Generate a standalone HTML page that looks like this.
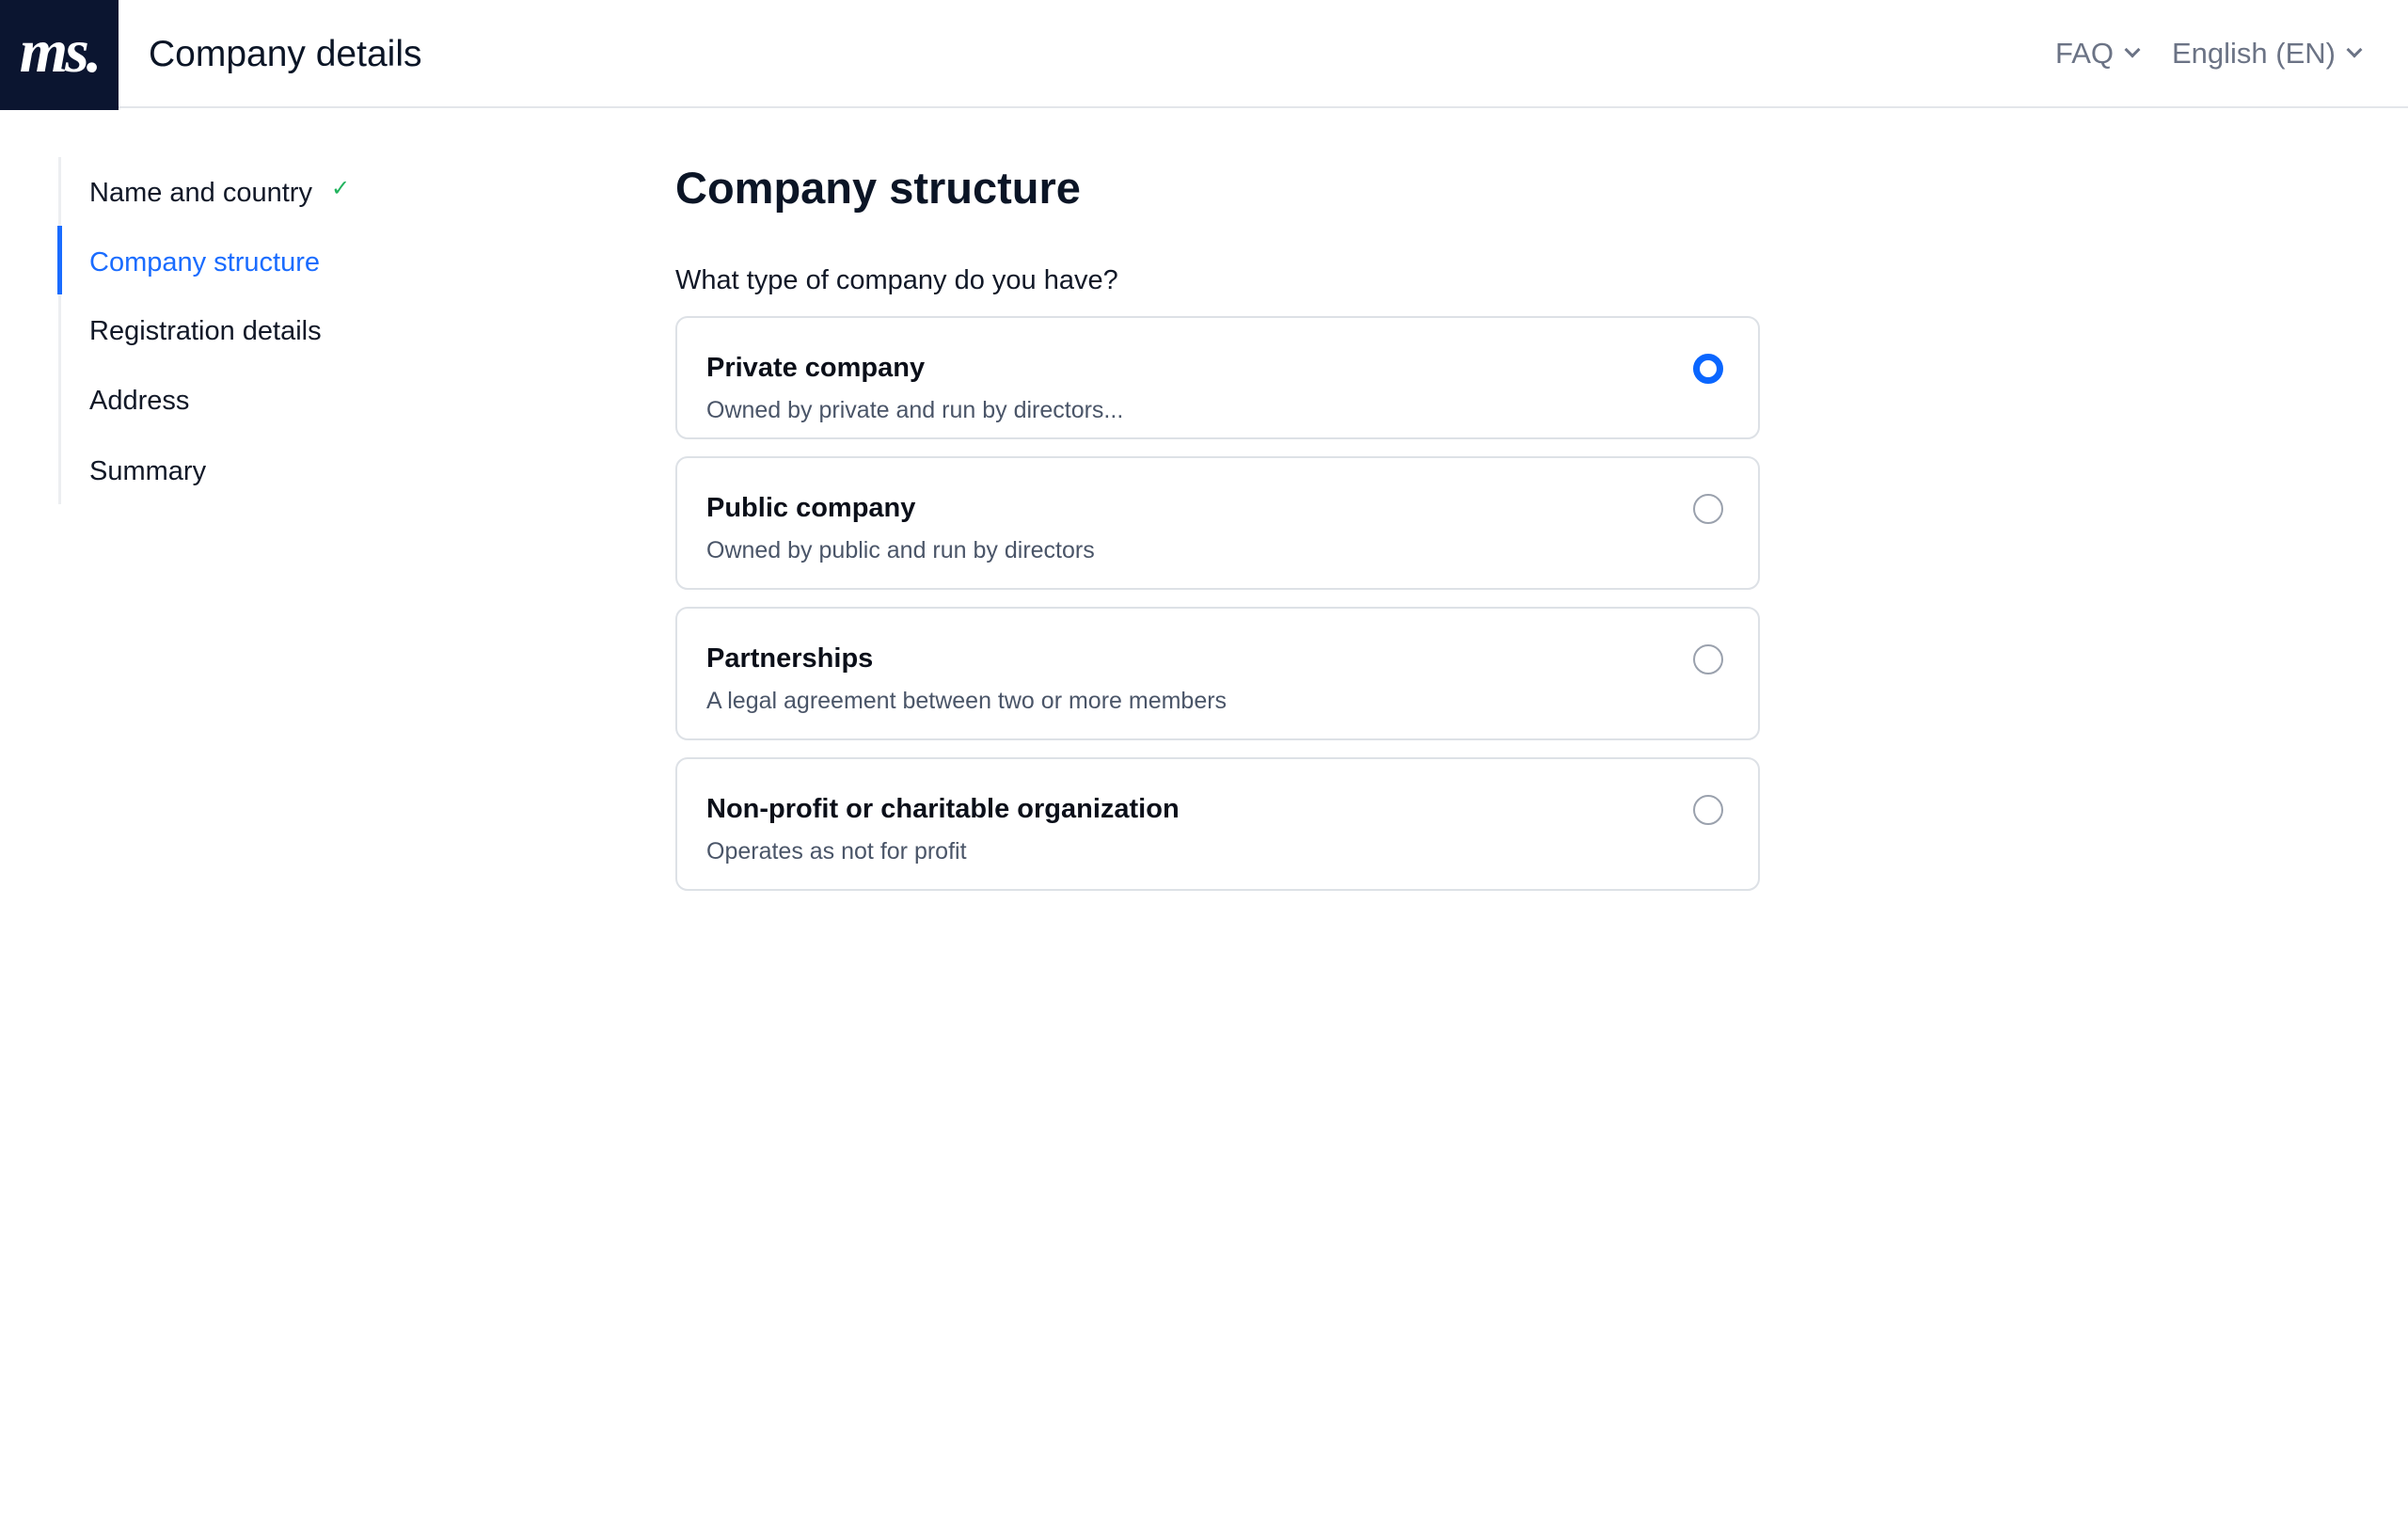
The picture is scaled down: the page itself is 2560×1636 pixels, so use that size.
<!DOCTYPE html>
<html><head><meta charset="utf-8"><style>
*{margin:0;padding:0;box-sizing:border-box}
body{width:2560px;height:1636px;background:#fff;font-family:"Liberation Sans",sans-serif;color:#0b1526;position:relative;overflow:hidden}
.hdr{position:absolute;left:0;top:0;width:2560px;height:115px;border-bottom:2px solid #e3e6ea}
.logo{position:absolute;left:0;top:0;width:126px;height:117px;background:#0b1530;color:#fff;font-family:"Liberation Serif",serif;font-style:italic;font-weight:bold;font-size:66px;line-height:110px;text-align:center;letter-spacing:-3px}
.title{position:absolute;left:158px;top:35px;font-size:39px;line-height:46px}
.nav{position:absolute;top:38px;font-size:31px;color:#6b7385;line-height:38px}
.chev{display:inline-block;width:12px;height:12px;border-right:3px solid #6b7385;border-bottom:3px solid #6b7385;transform:rotate(45deg);margin-left:14px;position:relative;top:-8px}
.side{position:absolute;left:62px;top:167px;width:3px;height:369px;background:#eceef1}
.bar{position:absolute;left:61px;top:240px;width:5px;height:73px;background:#1a6cff}
.it{position:absolute;left:95px;font-size:29px;line-height:36px;color:#111827}
.h1{position:absolute;left:718px;top:170px;font-size:47px;font-weight:bold;line-height:60px}
.q{position:absolute;left:718px;top:280px;font-size:29px;line-height:36px;color:#111827}
.card{position:absolute;left:718px;width:1153px;border:2px solid #dde1e6;border-radius:13px}
.ct{position:absolute;left:31px;font-size:29px;font-weight:bold;line-height:36px;color:#0b0f19}
.cs{position:absolute;left:31px;font-size:25px;line-height:32px;color:#4a5568}
.r{position:absolute;left:1080px;width:32px;height:32px;border-radius:50%;border:2px solid #9aa1ad}
.r.on{border:7px solid #0a66ff}
</style></head><body>
<div class="hdr"></div>
<div class="logo">ms.</div>
<div class="title">Company details</div>
<div class="nav" style="left:2185px">FAQ<span class="chev"></span></div>
<div class="nav" style="left:2309px">English (EN)<span class="chev"></span></div>
<div class="side"></div><div class="bar"></div>
<div class="it" style="top:187px">Name and country <span style="color:#22b35e;font-size:24px;margin-left:12px;position:relative;top:-6px">✓</span></div>
<div class="it" style="top:261px;color:#1a6cff">Company structure</div>
<div class="it" style="top:334px">Registration details</div>
<div class="it" style="top:408px">Address</div>
<div class="it" style="top:483px">Summary</div>
<div class="h1">Company structure</div>
<div class="q">What type of company do you have?</div>
<div class="card" style="top:336px;height:131px"><div class="ct" style="top:35px">Private company</div><div class="cs" style="top:82px">Owned by private and run by directors...</div><div class="r on" style="top:38px"></div></div>
<div class="card" style="top:485px;height:142px"><div class="ct" style="top:35px">Public company</div><div class="cs" style="top:82px">Owned by public and run by directors</div><div class="r" style="top:38px"></div></div>
<div class="card" style="top:645px;height:142px"><div class="ct" style="top:35px">Partnerships</div><div class="cs" style="top:82px">A legal agreement between two or more members</div><div class="r" style="top:38px"></div></div>
<div class="card" style="top:805px;height:142px"><div class="ct" style="top:35px">Non-profit or charitable organization</div><div class="cs" style="top:82px">Operates as not for profit</div><div class="r" style="top:38px"></div></div>
</body></html>
